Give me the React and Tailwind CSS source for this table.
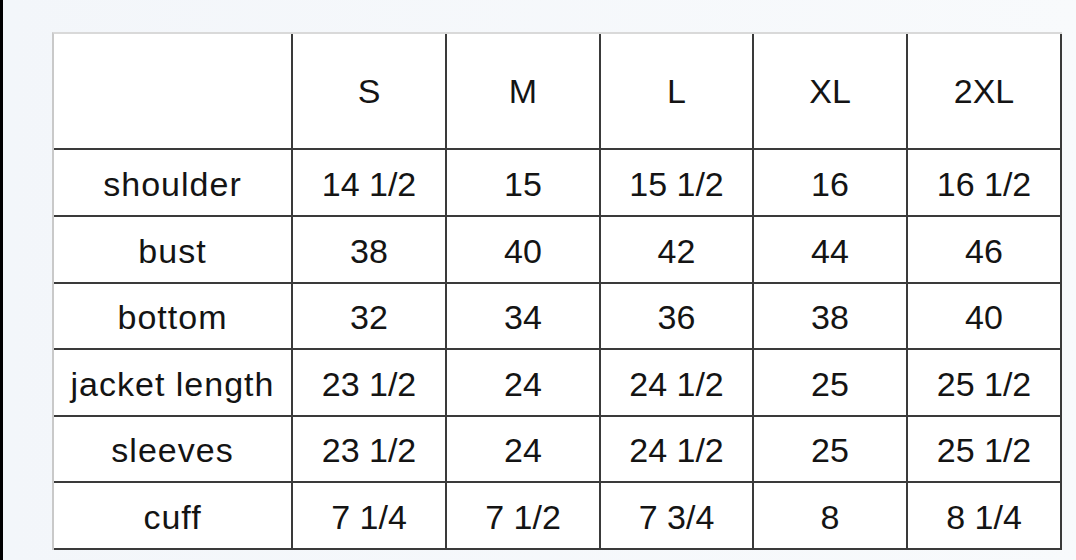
import React from "react";

const cols = ["S", "M", "L", "XL", "2XL"];
const rows = [
  ["shoulder", "14 1/2", "15", "15 1/2", "16", "16 1/2"],
  ["bust", "38", "40", "42", "44", "46"],
  ["bottom", "32", "34", "36", "38", "40"],
  ["jacket length", "23 1/2", "24", "24 1/2", "25", "25 1/2"],
  ["sleeves", "23 1/2", "24", "24 1/2", "25", "25 1/2"],
  ["cuff", "7 1/4", "7 1/2", "7 3/4", "8", "8 1/4"],
];
const rowH = ["h-[67px]", "h-[67px]", "h-[66px]", "h-[67px]", "h-[66px]", "h-[67px]"];

export default function App() {
  return (
    <div className="flex h-[560px] w-[1076px] overflow-hidden bg-[#f7f9fc]" style={{ fontFamily: '"Liberation Sans", Arial, sans-serif' }}>
      <div className="w-[3px] shrink-0 bg-black" />
      <div className="flex-1 bg-gradient-to-r from-[#f3f6fa] to-[#f8fafc] pl-[49px] pt-[32px]">
        <div className="grid w-[1010px] grid-cols-[239px_154px_154px_153px_154px_154px] border-l-2 border-t-2 border-l-[#c9c9c9] border-t-[#d9d9d9] bg-white text-[34px] text-[#141414]">
          <div className="h-[116px] border-b-2 border-r-2 border-[#3a3a3a]" />
          {cols.map((c) => (
            <div key={c} className="flex h-[116px] items-center justify-center border-b-2 border-r-2 border-[#3a3a3a]">
              {c}
            </div>
          ))}
          {rows.map((r, i) =>
            r.map((v, j) => (
              <div
                key={i + "-" + j}
                className={`flex items-center justify-center border-b-2 border-r-2 border-[#3a3a3a] pt-[3px] ${rowH[i]} ${j === 0 ? "tracking-[1px]" : ""}`}
              >
                {v}
              </div>
            ))
          )}
        </div>
      </div>
    </div>
  );
}
